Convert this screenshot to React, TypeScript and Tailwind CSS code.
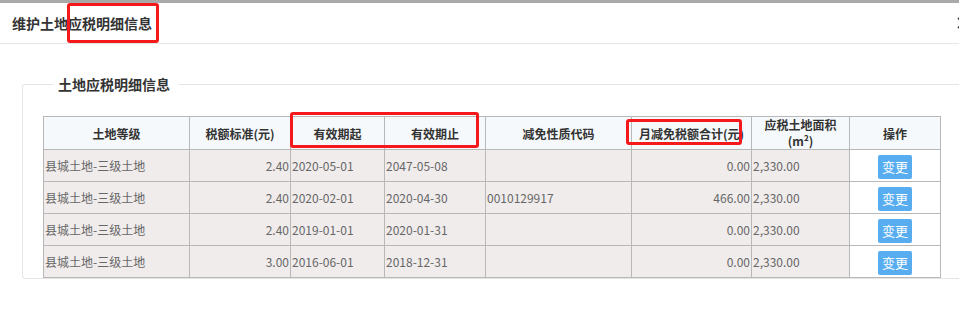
import React from "react";

type Row = {
  grade: string;
  rate: string;
  start: string;
  end: string;
  code: string;
  relief: string;
  area: string;
};

const rows: Row[] = [
  { grade: "县城土地-三级土地", rate: "2.40", start: "2020-05-01", end: "2047-05-08", code: "", relief: "0.00", area: "2,330.00" },
  { grade: "县城土地-三级土地", rate: "2.40", start: "2020-02-01", end: "2020-04-30", code: "0010129917", relief: "466.00", area: "2,330.00" },
  { grade: "县城土地-三级土地", rate: "2.40", start: "2019-01-01", end: "2020-01-31", code: "", relief: "0.00", area: "2,330.00" },
  { grade: "县城土地-三级土地", rate: "3.00", start: "2016-06-01", end: "2018-12-31", code: "", relief: "0.00", area: "2,330.00" },
];

const font = { fontFamily: '"Noto Sans CJK SC", "Noto Sans", sans-serif' };

const th = "h-[32px] border border-[#b8b8b8] bg-[#f6f9fb] p-0 text-center text-[12px] font-bold leading-[15px] text-[#333] whitespace-nowrap";
const td = "h-[32px] border border-[#b8b8b8] bg-[#f0ecec] px-[1px] py-0 text-[12px] text-[#666] whitespace-nowrap";

function Highlight({ className }: { className: string }) {
  return <div className={`pointer-events-none absolute rounded-[3px] border-[3px] border-[#f5191b] ${className}`} />;
}

export default function App() {
  return (
    <div className="relative h-[316px] w-[959px] overflow-hidden bg-white" style={font}>
      <div className="h-[3px] bg-[#a9a9a9]" />
      <div className="relative flex h-[41px] items-center border-b border-[#e6e6e6] pl-[12px]">
        <span className="text-[14px] font-bold text-[#333]">维护土地应税明细信息</span>
        <svg className="absolute left-[957px] top-[14px]" width="12" height="12" viewBox="0 0 12 12">
          <path d="M1 1 L11 11 M11 1 L1 11" stroke="#333" strokeWidth="1.6" />
        </svg>
      </div>

      <div className="pl-[22px] pt-[30px]">
        <fieldset className="w-[980px] rounded-[3px] border border-[#e4e4e4] pb-0 pl-[20px]">
          <legend className="ml-[10px] pl-[5px] pr-[9px] text-[14px] font-bold leading-[20px] text-[#333]">
            土地应税明细信息
          </legend>
          <table className="mt-[22px] table-fixed border-collapse">
            <colgroup>
              <col className="w-[146px]" />
              <col className="w-[101px]" />
              <col className="w-[94px]" />
              <col className="w-[101px]" />
              <col className="w-[146px]" />
              <col className="w-[120px]" />
              <col className="w-[98px]" />
              <col className="w-[91px]" />
            </colgroup>
            <thead>
              <tr>
                <th className={th}>土地等级</th>
                <th className={th}>税额标准(元)</th>
                <th className={th}>有效期起</th>
                <th className={th}>有效期止</th>
                <th className={th}>减免性质代码</th>
                <th className={th}>月减免税额合计(元)</th>
                <th className="h-[32px] border border-[#b8b8b8] bg-[#f6f9fb] p-0 text-center text-[12px] font-bold leading-[16px] text-[#333]">
                  <div>应税土地面积</div>
                  <div>(m²)</div>
                </th>
                <th className={th}>操作</th>
              </tr>
            </thead>
            <tbody>
              {rows.map((r, i) => (
                <tr key={i}>
                  <td className={`${td} text-left`}>{r.grade}</td>
                  <td className={`${td} text-right`}>{r.rate}</td>
                  <td className={`${td} text-left`}>{r.start}</td>
                  <td className={`${td} text-left`}>{r.end}</td>
                  <td className={`${td} text-left`}>{r.code}</td>
                  <td className={`${td} text-right`}>{r.relief}</td>
                  <td className={`${td} text-left`}>{r.area}</td>
                  <td className="h-[32px] border border-[#b8b8b8] bg-white p-0 text-center">
                    <button className="h-[24px] w-[34px] rounded-[2px] bg-[#58acf0] text-[13px] leading-[24px] text-white">
                      变更
                    </button>
                  </td>
                </tr>
              ))}
            </tbody>
          </table>
        </fieldset>
      </div>

      <Highlight className="left-[67px] top-[3px] h-[40px] w-[92px]" />
      <Highlight className="left-[290px] top-[112px] h-[36px] w-[189px]" />
      <Highlight className="left-[626px] top-[119px] h-[26px] w-[116px]" />
    </div>
  );
}
